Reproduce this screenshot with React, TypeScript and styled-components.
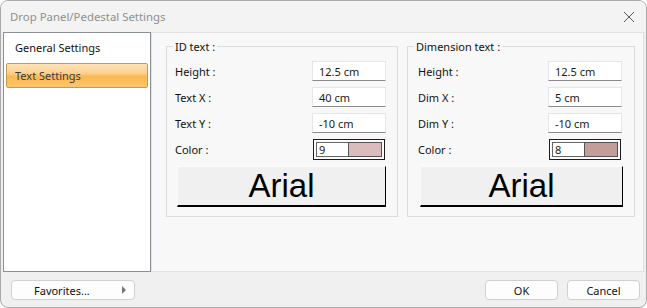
import React from 'react'
import styled, { createGlobalStyle } from 'styled-components'

const GlobalStyle = createGlobalStyle`
  html, body { margin: 0; padding: 0; background: #ffffff; }
  body { font-family: "Noto Sans", "Open Sans", sans-serif; font-size: 11px; color: #1a1a1a; }
`

type Row = { label: string; value: string }

type Group = {
  title: string
  rows: Row[]
  colorIndex: string
  swatch: string
  width: number
  padLeft: number
  padRight: number
  buttonWidth: number
}

const groups: Group[] = [
  {
    title: 'ID text :',
    rows: [
      { label: 'Height :', value: '12.5 cm' },
      { label: 'Text X :', value: '40 cm' },
      { label: 'Text Y :', value: '-10 cm' },
    ],
    colorIndex: '9',
    swatch: '#d9bcbb',
    width: 232,
    padLeft: 8,
    padRight: 11,
    buttonWidth: 209,
  },
  {
    title: 'Dimension text :',
    rows: [
      { label: 'Height :', value: '12.5 cm' },
      { label: 'Dim X :', value: '5 cm' },
      { label: 'Dim Y :', value: '-10 cm' },
    ],
    colorIndex: '8',
    swatch: '#c49c99',
    width: 228,
    padLeft: 10,
    padRight: 12,
    buttonWidth: 203,
  },
]

export default function App() {
  return (
    <>
      <GlobalStyle />
      <Window>
        <TitleBar>
          <Title>Drop Panel/Pedestal Settings</Title>
          <CloseButton>
            <svg width="12" height="12" viewBox="0 0 12 12">
              <path d="M1 1 L11 11 M11 1 L1 11" stroke="#5a5a5a" strokeWidth="1" fill="none" />
            </svg>
          </CloseButton>
        </TitleBar>

        <Body>
          <Sidebar>
            <NavItem>General Settings</NavItem>
            <NavItem $active>Text Settings</NavItem>
          </Sidebar>

          <Content>
            {groups.map((g) => (
              <GroupBox key={g.title} $width={g.width} $padLeft={g.padLeft} $padRight={g.padRight}>
                <Legend $shift={6 - g.padLeft}>{g.title}</Legend>
                <Rows>
                  {g.rows.map((r) => (
                    <FieldRow key={r.label}>
                      <Label>{r.label}</Label>
                      <TextBox>{r.value}</TextBox>
                    </FieldRow>
                  ))}
                  <FieldRow>
                    <Label>Color :</Label>
                    <ColorField>
                      <ColorIndex>{g.colorIndex}</ColorIndex>
                      <Swatch $color={g.swatch} />
                    </ColorField>
                  </FieldRow>
                </Rows>
                <FontButton $width={g.buttonWidth}>Arial</FontButton>
              </GroupBox>
            ))}
          </Content>
        </Body>

        <Footer>
          <FavButton>
            <span>Favorites...</span>
            <Arrow />
          </FavButton>
          <Actions>
            <DlgButton>OK</DlgButton>
            <DlgButton>Cancel</DlgButton>
          </Actions>
        </Footer>
      </Window>
    </>
  )
}

const Window = styled.div`
  box-sizing: border-box;
  width: 647px;
  height: 308px;
  background: #f0f0f0;
  border: 1px solid #a9a9a9;
  border-radius: 8px;
  display: flex;
  flex-direction: column;
  overflow: hidden;
`

const TitleBar = styled.div`
  height: 31px;
  background: #f3f3f3;
  display: flex;
  align-items: center;
  justify-content: space-between;
  padding: 0 8px 0 9px;
`

const Title = styled.span`
  color: #8f8f8f;
  font-size: 11.4px;
`

const CloseButton = styled.div`
  width: 16px;
  height: 16px;
  display: flex;
  align-items: center;
  justify-content: center;
  margin-right: 1px;
`

const Body = styled.div`
  display: flex;
  height: 240px;
  padding: 0 2px;
`

const Sidebar = styled.div`
  box-sizing: border-box;
  flex: 0 0 148px;
  background: #ffffff;
  border: 1px solid #8b8f96;
  padding: 2px 2px 0 2px;
  display: flex;
  flex-direction: column;
  gap: 3px;
`

const NavItem = styled.div<{ $active?: boolean }>`
  box-sizing: border-box;
  height: 25px;
  display: flex;
  align-items: center;
  padding-left: 8px;
  border-radius: 2px;
  color: ${(p) => (p.$active ? '#3c3c3c' : '#111111')};
  border: 1px solid ${(p) => (p.$active ? '#c99a4c' : 'transparent')};
  background: ${(p) =>
    p.$active
      ? 'linear-gradient(to bottom, #fee3b8 0%, #fdd08f 40%, #fbb851 55%, #fcc56d 100%)'
      : 'transparent'};
`

const Content = styled.div`
  flex: 0 0 493px;
  box-sizing: border-box;
  background: #f8f8f8;
  border: 1px solid #e2e2e2;
  padding: 6px 8px 0 14px;
  display: flex;
  gap: 9px;
  align-items: flex-start;
`

const GroupBox = styled.fieldset<{ $width: number; $padLeft: number; $padRight: number }>`
  box-sizing: border-box;
  flex: 0 0 ${(p) => p.$width}px;
  min-width: 0;
  margin: 0;
  border: 1px solid #dcdcdc;
  padding: 7px ${(p) => p.$padRight}px 9px ${(p) => p.$padLeft}px;
  display: flex;
  flex-direction: column;
`

const Legend = styled.legend<{ $shift: number }>`
  padding: 0 2px;
  margin-left: ${(p) => p.$shift}px;
  font-size: 11px;
  color: #111111;
`

const Rows = styled.div`
  display: flex;
  flex-direction: column;
  gap: 6px;
`

const FieldRow = styled.div`
  display: flex;
  align-items: center;
  justify-content: space-between;
  height: 20px;
`

const Label = styled.span`
  color: #111111;
  padding-top: 1px;
`

const TextBox = styled.div`
  box-sizing: border-box;
  width: 74px;
  height: 20px;
  background: #ffffff;
  border: 1px solid #e6e6e6;
  border-bottom: 1px solid #8a8a8a;
  padding-left: 6px;
  display: flex;
  align-items: center;
`

const ColorField = styled.div`
  box-sizing: border-box;
  width: 72px;
  height: 21px;
  margin-right: 1px;
  border: 1px solid #1c1c1c;
  box-shadow: inset 1px 1px 0 #ffffff, inset -1px -1px 0 #ffffff;
  padding: 2px;
  display: flex;
`

const ColorIndex = styled.div`
  width: 29px;
  background: #ffffff;
  border: 1px solid #666666;
  border-right: none;
  display: flex;
  align-items: center;
  padding-left: 2px;
`

const Swatch = styled.div<{ $color: string }>`
  flex: 1;
  background: ${(p) => p.$color};
  border: 1px solid #555555;
`

const FontButton = styled.div<{ $width: number }>`
  box-sizing: border-box;
  margin: 7px 0 0 2px;
  width: ${(p) => p.$width}px;
  height: 41px;
  background: #f0f0f0;
  border-top: 1px solid #fafafa;
  border-left: 1px solid #fafafa;
  border-right: 1px solid #000000;
  border-bottom: 2px solid #000000;
  display: flex;
  align-items: center;
  justify-content: center;
  font-family: "Liberation Sans", Arial, sans-serif;
  font-size: 33px;
  color: #000000;
`

const Footer = styled.div`
  flex: 1;
  display: flex;
  align-items: center;
  justify-content: space-between;
  padding: 1px 6px 0 10px;
`

const ButtonBase = styled.div`
  box-sizing: border-box;
  height: 20px;
  background: #fdfdfd;
  border: 1px solid #d0d0d0;
  border-radius: 4px;
  display: flex;
  align-items: center;
  color: #111111;
`

const FavButton = styled(ButtonBase)`
  width: 124px;
  justify-content: space-between;
  padding: 0 8px 0 22px;
`

const Arrow = styled.span`
  width: 0;
  height: 0;
  border-top: 4px solid transparent;
  border-bottom: 4px solid transparent;
  border-left: 4px solid #777777;
`

const Actions = styled.div`
  display: flex;
  gap: 9px;
`

const DlgButton = styled(ButtonBase)`
  width: 73px;
  justify-content: center;
`
